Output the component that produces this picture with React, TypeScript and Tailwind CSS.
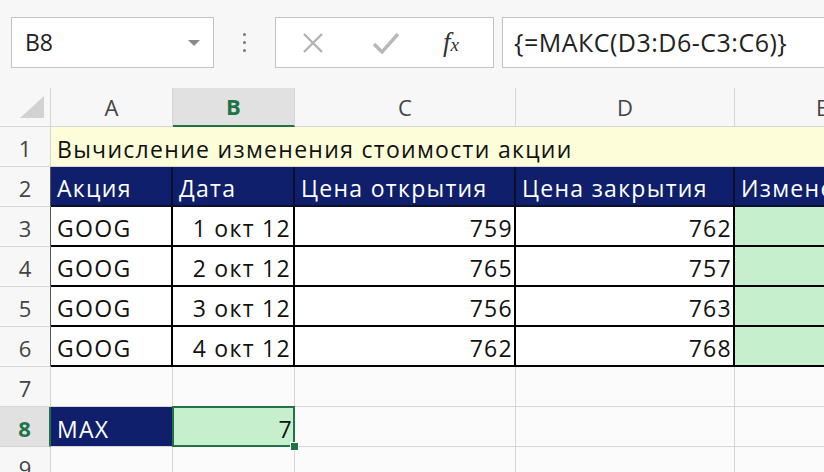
import React from "react";

const font = { fontFamily: '"Open Sans", "Noto Sans", sans-serif' };

const rows = [
  { n: 3, a: "GOOG", b: "1 окт 12", c: "759", d: "762" },
  { n: 4, a: "GOOG", b: "2 окт 12", c: "765", d: "757" },
  { n: 5, a: "GOOG", b: "3 окт 12", c: "756", d: "763" },
  { n: 6, a: "GOOG", b: "4 окт 12", c: "762", d: "768" },
];

const txt = "text-[23px] tracking-[1.3px] pt-[5px]";

function FormulaBar() {
  return (
    <div className="flex h-[88px] items-start overflow-hidden bg-[#f7f7f7] pl-[11px] pt-[17px]">
      <div className="flex h-[51px] w-[203px] shrink-0 items-center justify-between border border-[#c3c3c3] bg-white pl-[13px] pr-[12px]">
        <span className="text-[23px] text-[#222]">B8</span>
        <svg width="14" height="8" viewBox="0 0 14 8">
          <polygon points="1,1 13,1 7,7" fill="#8a8a8a" />
        </svg>
      </div>
      <div className="flex h-[51px] w-[61px] shrink-0 flex-col items-center justify-center gap-[5px]">
        <span className="h-[3px] w-[3px] rounded-full bg-[#777]" />
        <span className="h-[3px] w-[3px] rounded-full bg-[#777]" />
        <span className="h-[3px] w-[3px] rounded-full bg-[#777]" />
      </div>
      <div className="flex h-[51px] w-[219px] shrink-0 items-center border border-[#c3c3c3] bg-white">
        <svg className="ml-[26px]" width="22" height="20" viewBox="0 0 22 20">
          <path d="M2 1 L20 19 M20 1 L2 19" stroke="#b3b3b3" strokeWidth="2.4" fill="none" />
        </svg>
        <svg className="ml-[49px]" width="26" height="22" viewBox="0 0 26 22">
          <path d="M1 12 L9 20 L25 2" stroke="#b8b8b8" strokeWidth="3.4" fill="none" />
        </svg>
        <span
          className="ml-[44px] text-[27px] italic leading-none text-[#333]"
          style={{ fontFamily: '"Liberation Serif", serif' }}
        >
          f<span className="text-[19px]">x</span>
        </span>
      </div>
      <div className="ml-[8px] flex h-[51px] w-[340px] shrink-0 items-center border border-[#c3c3c3] bg-white pl-[11px]">
        <span className="whitespace-nowrap text-[25px] tracking-[0.5px] text-[#222]">{"{=МАКС(D3:D6-C3:C6)}"}</span>
      </div>
    </div>
  );
}

function Hdr({ children, sel }: { children?: React.ReactNode; sel?: boolean }) {
  return (
    <div
      className={
        "flex items-center justify-center border-r border-b border-[#d6d6d6] text-[22px] " +
        (sel
          ? "border-b-2 border-b-[#217346] bg-[#e1e1e1] font-bold text-[#217346]"
          : "bg-[#f7f7f7] text-[#444]")
      }
    >
      {children}
    </div>
  );
}

function RowNum({ n, sel, dark }: { n: number; sel?: boolean; dark?: boolean }) {
  return (
    <div
      className={
        "flex items-center justify-center border-b border-r pt-[4px] text-[22px] " +
        (sel
          ? "border-b-[#d6d6d6] border-r-2 border-r-[#217346] bg-[#e1e1e1] font-bold text-[#217346]"
          : "border-b-[#d6d6d6] bg-[#f7f7f7] text-[#444] ") +
        (dark ? " border-r-[#555]" : sel ? "" : " border-r-[#d6d6d6]")
      }
    >
      {n}
    </div>
  );
}

export default function App() {
  return (
    <div className="h-[472px] w-[824px] overflow-hidden bg-white" style={font}>
      <FormulaBar />
      <div className="grid grid-cols-[51px_122px_122px_221px_219px_89px] grid-rows-[39px_40px_40px_40px_40px_40px_40px_40px_40px_40px]">
        {/* column headers */}
        <div className="relative border-r border-b border-[#d6d6d6] bg-[#f7f7f7]">
          <svg className="absolute bottom-[8px] right-[6px]" width="24" height="22" viewBox="0 0 24 22">
            <polygon points="24,0 24,22 0,22" fill="#d2d2d2" />
          </svg>
        </div>
        <Hdr>A</Hdr>
        <Hdr sel>B</Hdr>
        <Hdr>C</Hdr>
        <Hdr>D</Hdr>
        <div className="flex items-center border-b border-[#d6d6d6] bg-[#f7f7f7] pl-[81px] text-[22px] text-[#444]">E</div>

        {/* row 1 */}
        <RowNum n={1} />
        <div className={"col-span-5 flex items-center overflow-hidden whitespace-nowrap border-b border-[#d6d6d6] bg-[#fdfdd9] pl-[6px] text-[#111] " + txt}>
          Вычисление изменения стоимости акции
        </div>

        {/* row 2 */}
        <RowNum n={2} dark />
        {["Акция", "Дата", "Цена открытия", "Цена закрытия"].map((t) => (
          <div
            key={t}
            className={"flex items-center whitespace-nowrap border-r-2 border-b-2 border-[#0a0f2a] bg-[#0f1f6b] pl-[6px] text-white " + txt}
          >
            {t}
          </div>
        ))}
        <div className={"flex items-center overflow-hidden whitespace-nowrap border-b-2 border-[#0a0f2a] bg-[#0f1f6b] pl-[6px] text-white " + txt}>
          Изменение
        </div>

        {/* data rows */}
        {rows.map((r) => (
          <React.Fragment key={r.n}>
            <RowNum n={r.n} dark />
            <div className={"flex items-center border-r-2 border-b-2 border-black pl-[6px] text-[#111] " + txt}>{r.a}</div>
            <div className={"flex items-center justify-end whitespace-nowrap border-r-2 border-b-2 border-black pr-[2px] text-[#111] " + txt}>{r.b}</div>
            <div className={"flex items-center justify-end border-r-2 border-b-2 border-black pr-[1px] text-[#111] " + txt}>{r.c}</div>
            <div className={"flex items-center justify-end border-r-2 border-b-2 border-black pr-[1px] text-[#111] " + txt}>{r.d}</div>
            <div className="border-b-2 border-black bg-[#c6efce]" />
          </React.Fragment>
        ))}

        {/* row 7 */}
        <RowNum n={7} />
        {[0, 1, 2, 3].map((i) => (
          <div key={i} className="border-r border-b border-[#d6d6d6] bg-[#fbfbfb]" />
        ))}
        <div className="border-b border-[#d6d6d6] bg-[#fbfbfb]" />

        {/* row 8 */}
        <RowNum n={8} sel />
        <div className={"flex items-center border-b border-r border-[#d6d6d6] bg-[#0f1f6b] pl-[6px] text-white " + txt}>MAX</div>
        <div className={"relative -ml-px -mt-px flex items-center justify-end border-2 border-[#217346] bg-[#c6efce] pr-0 text-[#111] " + txt}>
          7
          <span className="absolute -bottom-[6px] -right-[6px] h-[9px] w-[9px] border border-white bg-[#217346]" />
        </div>
        <div className="border-r border-b border-[#d6d6d6] bg-[#fbfbfb]" />
        <div className="border-r border-b border-[#d6d6d6] bg-[#fbfbfb]" />
        <div className="border-b border-[#d6d6d6] bg-[#fbfbfb]" />

        {/* row 9 */}
        <RowNum n={9} />
        {[0, 1, 2, 3].map((i) => (
          <div key={i} className="border-r border-b border-[#d6d6d6] bg-[#fbfbfb]" />
        ))}
        <div className="border-b border-[#d6d6d6] bg-[#fbfbfb]" />
      </div>
    </div>
  );
}
